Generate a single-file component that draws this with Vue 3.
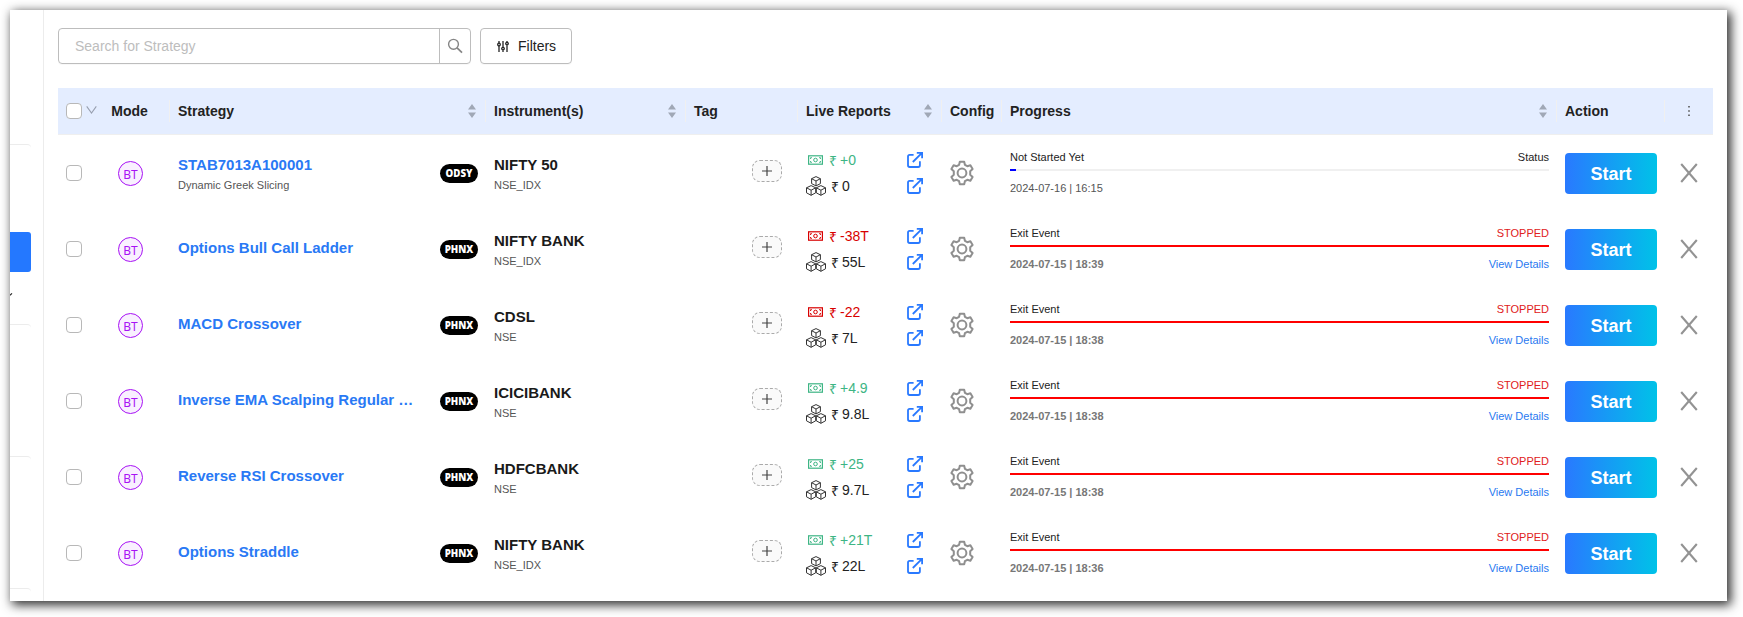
<script setup>
const rows = [
  { name: 'STAB7013A100001', sub: 'Dynamic Greek Slicing', badge: 'ODSY', inst: 'NIFTY 50', ex: 'NSE_IDX', pl: '+0', cap: '0', date: '2024-07-16 | 16:15', idle: true },
  { name: 'Options Bull Call Ladder', badge: 'PHNX', inst: 'NIFTY BANK', ex: 'NSE_IDX', pl: '-38T', cap: '55L', date: '2024-07-15 | 18:39' },
  { name: 'MACD Crossover', badge: 'PHNX', inst: 'CDSL', ex: 'NSE', pl: '-22', cap: '7L', date: '2024-07-15 | 18:38' },
  { name: 'Inverse EMA Scalping Regular …', badge: 'PHNX', inst: 'ICICIBANK', ex: 'NSE', pl: '+4.9', cap: '9.8L', date: '2024-07-15 | 18:38' },
  { name: 'Reverse RSI Crossover', badge: 'PHNX', inst: 'HDFCBANK', ex: 'NSE', pl: '+25', cap: '9.7L', date: '2024-07-15 | 18:38' },
  { name: 'Options Straddle', badge: 'PHNX', inst: 'NIFTY BANK', ex: 'NSE_IDX', pl: '+21T', cap: '22L', date: '2024-07-15 | 18:36' },
]
const heads = [
  { t: 'Mode', c: 'mode' },
  { t: 'Strategy', sort: true },
  { t: 'Instrument(s)', sort: true },
  { t: 'Tag' },
  { t: 'Live Reports', sort: true },
  { t: 'Config' },
  { t: 'Progress', sort: true },
  { t: 'Action' },
]
</script>

<template>
  <div class="stage">
    <div class="window">
      <aside class="rail">
        <div class="sec s1"></div>
        <div class="active"></div>
        <svg class="tick" width="3" height="3" viewBox="0 0 3 3"><path d="M0 2.2L2 .4" stroke="#222" stroke-width="1.2" /></svg>
        <div class="sec s2"></div>
        <div class="sec s3"></div>
        <div class="sec s4"></div>
      </aside>
      <main>
        <div class="tools">
          <div class="search">
            <span class="ph">Search for Strategy</span>
            <span class="go">
              <svg width="16" height="16" viewBox="0 0 16 16" fill="none" stroke="#858585" stroke-width="1.4"><circle cx="6.5" cy="6.3" r="4.9" /><path d="M10.1 9.9L15 14.7" stroke-width="1.7" /></svg>
            </span>
          </div>
          <div class="filters">
            <svg width="12" height="13" viewBox="0 0 12 13" fill="none" stroke="#222" stroke-width="1.3"><path d="M2 1V3M2 6V12M6 1V7M6 10.3V12M10 1V2M10 5.2V12" /><circle cx="2" cy="4.5" r="1.3" /><circle cx="6" cy="8.6" r="1.3" /><circle cx="10" cy="3.6" r="1.3" /></svg>
            <span>Filters</span>
          </div>
        </div>

        <div class="grid head">
          <div class="cell check">
            <i class="box"></i>
            <svg class="drop" width="11" height="8" viewBox="0 0 11 8" fill="none" stroke="#98a0b0" stroke-width="1.1"><path d="M.7 .4L5.5 7L10.3 .4" /></svg>
          </div>
          <div v-for="h in heads" :key="h.t" class="cell th" :class="h.c">
            <span>{{ h.t }}</span>
            <svg v-if="h.sort" width="8" height="14" viewBox="0 0 8 14" fill="#a0a8b6"><path d="M4 .1L8 5.5H0ZM4 13.9L8 8.5H0Z" /></svg>
          </div>
          <div class="cell more">
            <svg width="2" height="12" viewBox="0 0 2 12" fill="#555"><path d="M.2 1h1.6v1.6H.2zM.2 5.2h1.6v1.6H.2zM.2 9.4h1.6v1.6H.2z" /></svg>
          </div>
        </div>

        <div v-for="(r, i) in rows" :key="i" class="grid row">
          <div class="cell check"><i class="box"></i></div>
          <div class="cell modec"><span class="bt">BT</span></div>
          <div class="cell strat">
            <div class="names" :class="{ two: r.sub }">
              <div class="name link">{{ r.name }}</div>
              <div v-if="r.sub" class="sub">{{ r.sub }}</div>
            </div>
            <span class="badge">{{ r.badge }}</span>
          </div>
          <div class="cell">
            <div class="names two">
              <div class="name">{{ r.inst }}</div>
              <div class="sub">{{ r.ex }}</div>
            </div>
          </div>
          <div class="cell tag">
            <span class="plus"><svg width="10" height="10" viewBox="0 0 10 10" stroke="#444" stroke-width="1.2"><path d="M5 0V10M0 5H10" /></svg></span>
          </div>
          <div class="cell live">
            <div class="line pl" :class="{ neg: r.pl[0] === '-' }">
              <svg width="15" height="10" viewBox="0 0 15 10" fill="none" stroke="currentColor"><rect x=".6" y=".8" width="13.8" height="8.4" stroke-width="1.2" /><circle cx="7.5" cy="5" r="1.8" /><path d="M2.5 4V2.7H4M11 2.7h1.5V4M2.5 6v1.3H4M11 7.3h1.5V6" stroke-width=".9" /></svg>
              <span class="rs">₹</span><span>{{ r.pl }}</span>
              <svg class="ext" width="16" height="16" viewBox="0 0 16 16" fill="none" stroke="#2979ff" stroke-width="1.8"><path d="M6.6 2.9H2.6Q1 2.9 1 4.5V13.3Q1 15 2.7 15H11.2Q12.9 15 12.9 13.3V9.2M5.8 10L15 .9M9.8 .9H15.1V6.2" /></svg>
            </div>
            <div class="line cap">
              <svg width="20" height="20" viewBox="0 0 20 20" fill="none" stroke="#333" stroke-width="1" stroke-linejoin="round">
                <path d="M10 .6L14.4 2.7V7.6L10 9.9L5.6 7.6V2.7ZM5.6 2.7L10 5L14.4 2.7M10 5V9.9" />
                <path d="M5.1 9.6L9.7 11.8V16.8L5.1 19.3L.5 16.8V11.8ZM.5 11.8L5.1 14.2L9.7 11.8M5.1 14.2V19.3" />
                <path d="M14.9 9.6L19.5 11.8V16.8L14.9 19.3L10.3 16.8V11.8ZM10.3 11.8L14.9 14.2L19.5 11.8M14.9 14.2V19.3" />
              </svg>
              <span class="rs">₹</span><span>{{ r.cap }}</span>
              <svg class="ext" width="16" height="16" viewBox="0 0 16 16" fill="none" stroke="#2979ff" stroke-width="1.8"><path d="M6.6 2.9H2.6Q1 2.9 1 4.5V13.3Q1 15 2.7 15H11.2Q12.9 15 12.9 13.3V9.2M5.8 10L15 .9M9.8 .9H15.1V6.2" /></svg>
            </div>
          </div>
          <div class="cell conf">
            <svg width="24" height="26" viewBox="0 0 24 26" fill="none" stroke="#8f8f8f" stroke-width="2" stroke-linejoin="round"><path d="M9.8 1.7H14.2L14.9 4.8L17.3 6.2L20.4 5.2L22.6 9L20.2 11.3V14.7L22.6 17L20.4 20.8L17.3 19.8L14.9 21.2L14.2 24.3H9.8L9.1 21.2L6.7 19.8L3.6 20.8L1.4 17L3.8 14.7V11.3L1.4 9L3.6 5.2L6.7 6.2L9.1 4.8Z" /><circle cx="12" cy="13" r="4.4" /></svg>
          </div>
          <div class="cell prog" :class="{ idle: r.idle }">
            <div class="pair"><span>{{ r.idle ? 'Not Started Yet' : 'Exit Event' }}</span><span class="st">{{ r.idle ? 'Status' : 'STOPPED' }}</span></div>
            <div class="bar"><i></i></div>
            <div class="pair low"><span class="date">{{ r.date }}</span><span v-if="!r.idle" class="det">View Details</span></div>
          </div>
          <div class="cell"><span class="start">Start</span></div>
          <div class="cell close">
            <svg width="18" height="20" viewBox="0 0 18 20" stroke="#939393" stroke-width="2.1"><path d="M1.2 1L16.8 19M16.8 1L1.2 19" /></svg>
          </div>
        </div>
      </main>
    </div>
  </div>
</template>

<style>
body { margin: 0; background: #fff; }
</style>

<style scoped>
* { box-sizing: border-box; }
.stage { width: 1743px; height: 617px; padding: 10px 16px 16px 10px; overflow: hidden; font-family: "Liberation Sans", Arial, sans-serif; color: #222; }
.window { width: 1717px; height: 591px; background: #fff; display: flex; box-shadow: 3px 3px 10px 1px rgba(0, 0, 0, .82); }
.rail { width: 34px; flex: none; border-right: 1px solid #ececec; padding-right: 12px; display: flex; flex-direction: column; }
.sec { border-top: 1px solid #ececec; border-top-right-radius: 4px; height: 4px; flex: none; }
.s1 { margin-top: 134px; }
.active { height: 40px; flex: none; margin-top: 84px; background: #2478ff; border-radius: 0 3px 3px 0; }
.tick { flex: none; margin-top: 21px; }
.s2 { margin-top: 28px; }
.s3 { margin-top: 128px; }
.s4 { margin-top: 128px; }
main { padding: 18px 0 0 14px; }
.tools { display: flex; gap: 9px; height: 36px; margin-bottom: 24px; }
.search { width: 413px; border: 1px solid #bdbdbd; border-radius: 4px; display: flex; box-shadow: 0 1px 1px rgba(0, 0, 0, .03); }
.ph { flex: 1; padding-left: 16px; line-height: 35px; font-size: 14px; color: #bdbdbd; }
.go { width: 31px; border-left: 1px solid #bdbdbd; display: flex; align-items: center; justify-content: center; }
.filters { width: 92px; border: 1px solid #bdbdbd; border-radius: 4px; display: flex; align-items: center; padding-left: 16px; gap: 9px; font-size: 14px; line-height: 34px; box-shadow: 0 1px 1px rgba(0, 0, 0, .03); }
.grid { display: grid; width: 1655px; grid-template-columns: 32px 80px 316px 200px 112px 144px 60px 555px 108px 48px; }
.head { height: 47px; background: #e4edff; border-bottom: 1px solid #efefef; }
.row { height: 76px; }
.cell { padding: 0 8px; display: flex; align-items: center; min-width: 0; position: relative; }
.box { width: 16px; height: 16px; flex: none; border: 1px solid #b8b8b8; border-radius: 4px; background: #fff; }
.drop { position: absolute; left: 28px; top: 18px; }
.th { font-size: 14px; font-weight: 700; justify-content: space-between; white-space: nowrap; }
.th svg { margin-right: 2px; }
.th::after { content: ""; position: absolute; right: 0; top: 12px; height: 22px; width: 1px; background: #f0f0f0; }
.th.mode { justify-content: center; padding-right: 9px; }
.more { justify-content: center; }
.modec { justify-content: center; padding-left: 9px; }
.bt { width: 25px; height: 25px; margin-top: 1px; border: 1px solid #a812f5; border-radius: 50%; background: #f9f0ff; color: #a812f5; font: 12px/25px "Noto Sans", sans-serif; text-align: center; }
.strat { justify-content: space-between; }
.name { font-size: 15px; font-weight: 700; line-height: 20px; white-space: nowrap; color: #1a1a1a; }
.sub { font-size: 11px; line-height: 17px; color: #555; margin-top: 2px; }
.names { margin-top: -2px; }
.names.two { margin-top: 3px; }
.name.link { color: #2979f5; }
.badge { width: 38px; height: 19px; margin-top: 1px; border-radius: 10px; background: #000; color: #fff; font: 800 9.7px/19px "Open Sans", "Noto Sans", sans-serif; text-align: center; }
.tag { justify-content: flex-end; padding-right: 16px; }
.plus { width: 30px; height: 22px; margin-top: -4px; border: 1px dashed #aaa; border-radius: 8px; background: #fafafa; display: flex; align-items: center; justify-content: center; }
.live { flex-direction: column; align-items: stretch; justify-content: center; font-size: 14px; }
.line { height: 26px; display: flex; align-items: center; }
.pl { color: #3db584; padding-left: 2px; }
.pl.neg { color: #d80000; }
.pl .rs { margin-left: 6px; }
.cap .rs { margin-left: 5px; }
.rs { margin-right: 3px; }
.ext { margin-left: auto; margin-right: 11px; }
.conf { justify-content: flex-start; }
.prog { display: block; padding-top: 14px; font-size: 11px; line-height: 16px; }
.pair { display: flex; justify-content: space-between; }
.bar { height: 2px; margin-top: 4px; background: #f0f0f0; }
.bar i { display: block; height: 2px; background: #f00; }
.idle .bar i { width: 6px; background: #00f; }
.low { margin-top: 9px; }
.st { color: #e02020; }
.idle .st { color: #222; }
.date { color: #777; font-weight: 700; }
.idle .date { color: #555; font-weight: 400; }
.det { color: #2979f0; }
.start { width: 92px; height: 41px; margin-top: 1px; border-radius: 4px; background: linear-gradient(90deg, #2979ff, #00c2e8); color: #fff; font-size: 18px; font-weight: 700; line-height: 42px; text-align: center; }
.close { justify-content: center; }
</style>
